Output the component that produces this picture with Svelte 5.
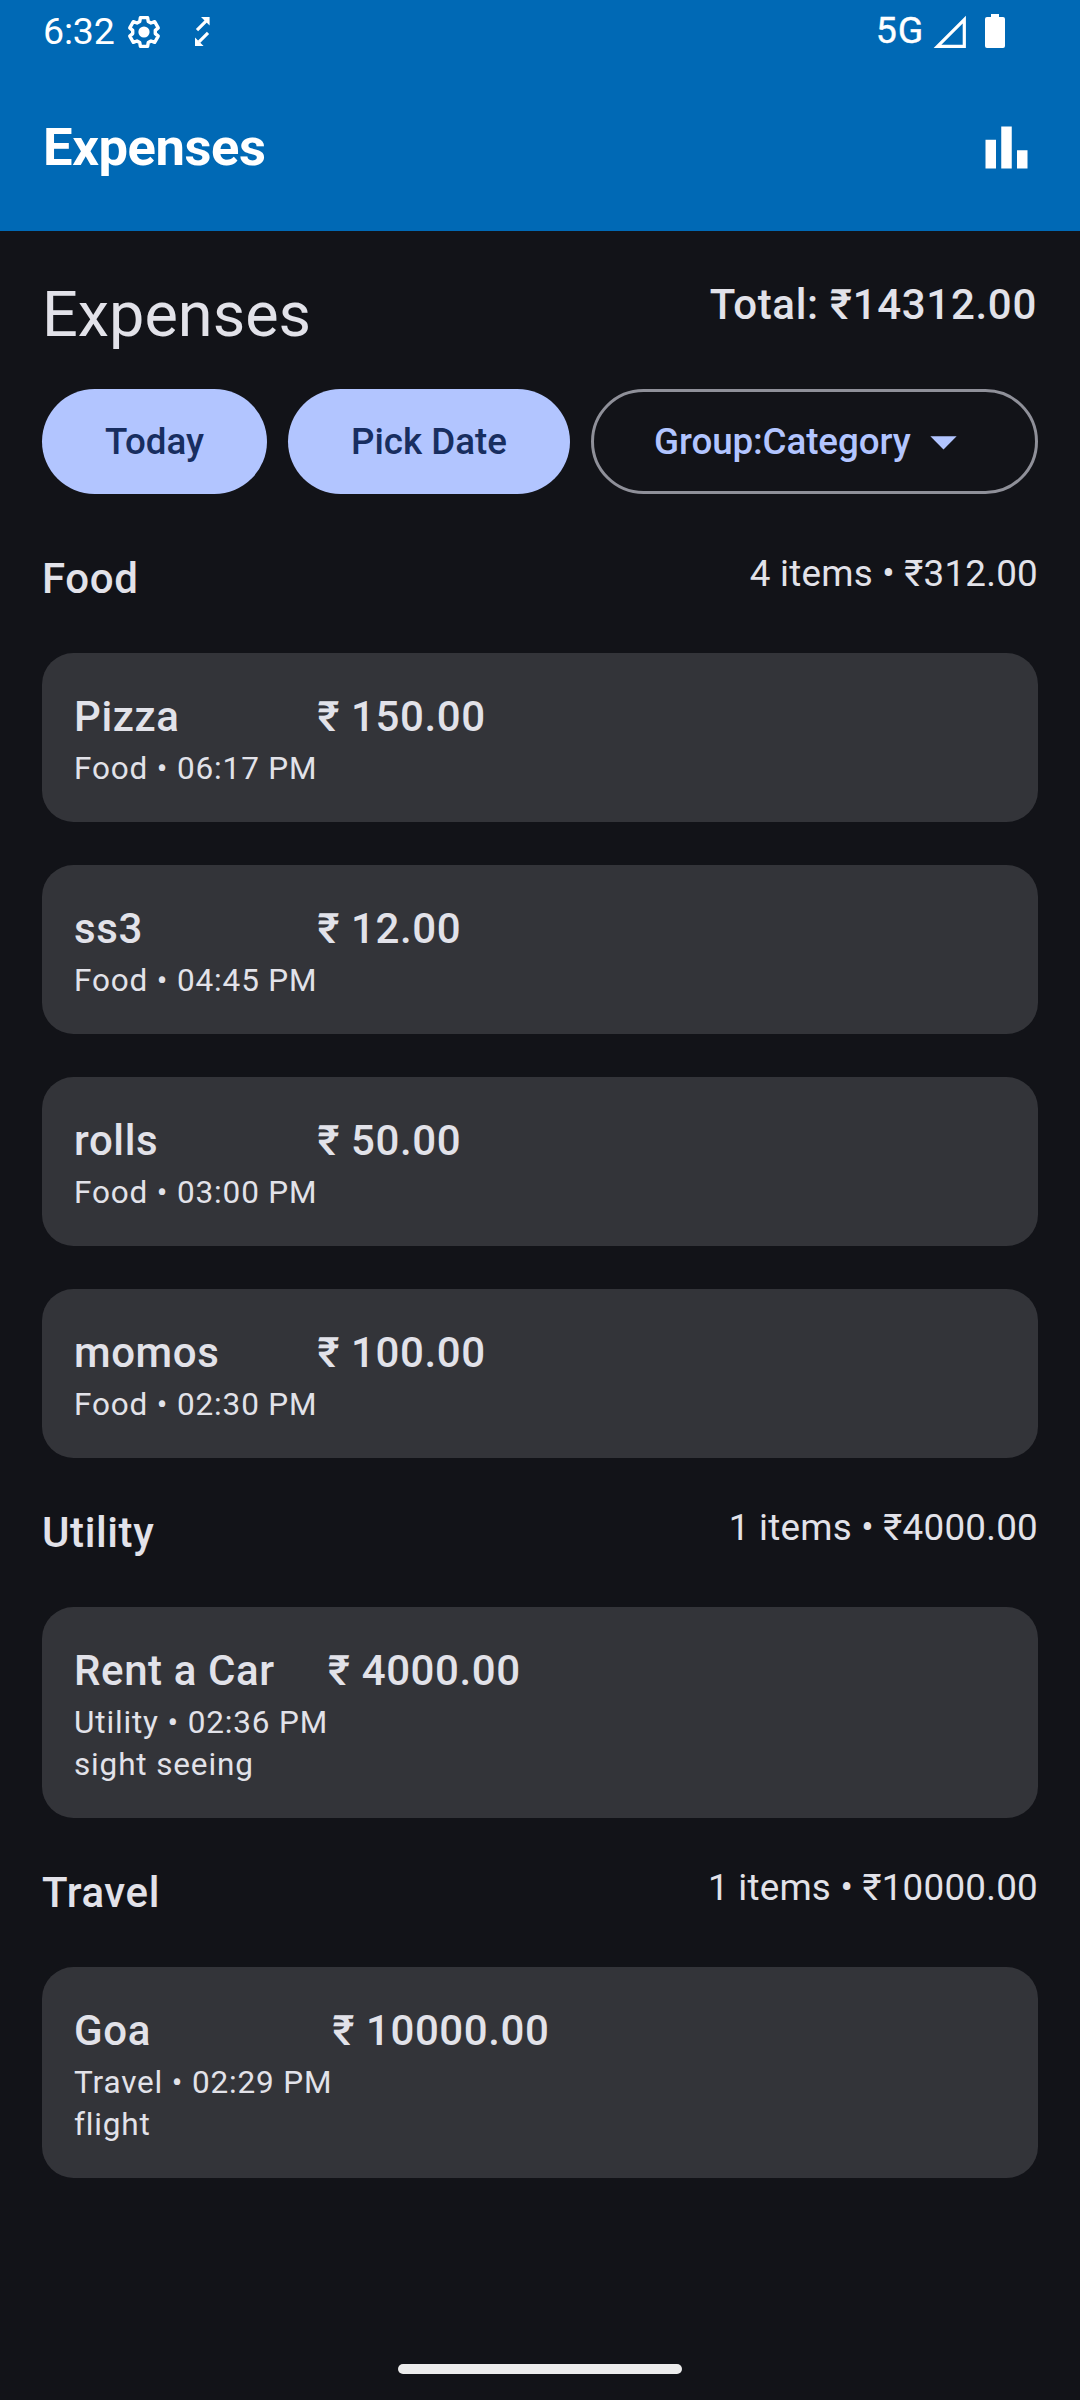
<script>
  const groups = [
    {
      name: 'Food',
      summary: '4 items • ₹312.00',
      items: [
        { title: 'Pizza', meta: 'Food • 06:17 PM', amount: '₹ 150.00' },
        { title: 'ss3', meta: 'Food • 04:45 PM', amount: '₹ 12.00' },
        { title: 'rolls', meta: 'Food • 03:00 PM', amount: '₹ 50.00' },
        { title: 'momos', meta: 'Food • 02:30 PM', amount: '₹ 100.00' },
      ],
    },
    {
      name: 'Utility',
      summary: '1 items • ₹4000.00',
      items: [
        { title: 'Rent a Car', meta: 'Utility • 02:36 PM', amount: '₹ 4000.00', note: 'sight seeing' },
      ],
    },
    {
      name: 'Travel',
      summary: '1 items • ₹10000.00',
      items: [
        { title: 'Goa', meta: 'Travel • 02:29 PM', amount: '₹ 10000.00', note: 'flight' },
      ],
    },
  ];

  // Six-toothed gear outline centred on 0,0; each tooth is [angle offset, radius] pairs.
  const tooth = [[-22, 11.4], [-14, 14.8], [14, 14.8], [22, 11.4]];
  const gear = [0, 60, 120, 180, 240, 300]
    .flatMap((base) =>
      tooth.map(([offset, radius]) => {
        const a = ((base + offset) * Math.PI) / 180;
        return `${(radius * Math.sin(a)).toFixed(2)},${(-radius * Math.cos(a)).toFixed(2)}`;
      })
    )
    .join(' ');
</script>

<div class="screen">
  <header>
    <div class="status">
      <div class="status-left">
        <span class="clock">6:32</span>
        <svg class="gear" viewBox="-17 -17 34 34">
          <polygon points={gear} fill="none" stroke="#fff" stroke-width="3.4" stroke-linejoin="round" />
          <circle r="5.6" fill="#fff" />
        </svg>
        <svg class="arrows" viewBox="0 0 15 29">
          <path d="M6 0h8.600v8.600zM0 20.400L8.600 29H0z" fill="#fff" />
          <path d="M2 13.200L11 4.200M13 15.800L4 24.800" fill="none" stroke="#fff" stroke-width="3.100" />
        </svg>
      </div>
      <div class="status-right">
        <span class="network">5G</span>
        <svg class="signal" viewBox="0 0 33 33">
          <path d="M4.500 31.300H31.300V4.500z" fill="none" stroke="#fff" stroke-width="3.200" />
        </svg>
        <svg class="battery" viewBox="0 0 20 34">
          <path d="M6 0h8v3h4a2 2 0 0 1 2 2v27a2 2 0 0 1-2 2H2a2 2 0 0 1-2-2V5a2 2 0 0 1 2-2h4z" fill="#fff" />
        </svg>
      </div>
    </div>
    <div class="appbar">
      <span class="title">Expenses</span>
      <svg class="chart" viewBox="0 0 24 24">
        <path d="M4 9h4v11H4zM16 13h4v7h-4zM10 4h4v16h-4z" fill="#fff" />
      </svg>
    </div>
  </header>

  <main>
    <div class="heading">
      <h1>Expenses</h1>
      <span class="total">Total: ₹14312.00</span>
    </div>
    <div class="filters">
      <button class="filled">Today</button>
      <button class="filled">Pick Date</button>
      <button class="outlined">
        <span>Group:Category</span>
        <svg viewBox="0 0 24 24"><path d="M7 10l5 5 5-5z" fill="currentColor" /></svg>
      </button>
    </div>

    <div class="list">
      {#each groups as group}
        <div class="group-head">
          <h2>{group.name}</h2>
          <span>{group.summary}</span>
        </div>
        {#each group.items as item}
          <div class="card">
            <div class="info">
              <div class="name">{item.title}</div>
              <div class="meta">{item.meta}</div>
              {#if item.note}<div class="meta">{item.note}</div>{/if}
            </div>
            <div class="name">{item.amount}</div>
          </div>
        {/each}
      {/each}
    </div>
  </main>

  <div class="nav"><div class="handle"></div></div>
</div>

<style>
  :global(body) {
    margin: 0;
    background: #121318;
  }
  .screen {
    width: 1080px;
    height: 2400px;
    display: flex;
    flex-direction: column;
    overflow: hidden;
    background: #121318;
    color: #e2e2e9;
    font-family: Roboto, 'Noto Sans', sans-serif;
  }
  svg {
    display: block;
    flex: none;
  }
  header {
    background: #0069b5;
    color: #fff;
    height: 231px;
    flex: none;
  }
  .status {
    height: 63px;
    display: flex;
    justify-content: space-between;
    align-items: flex-start;
    padding: 0 75px 0 43px;
  }
  .status-left,
  .status-right {
    display: flex;
    align-items: center;
    height: 63px;
  }
  .status-right {
    height: 62px;
  }
  .clock,
  .network {
    font-size: 37.500px;
    line-height: 60px;
    padding-bottom: 2px;
  }
  .clock {
    width: 72px;
    letter-spacing: -0.200px;
  }
  .network {
    letter-spacing: 0.800px;
    -webkit-text-stroke: 0.400px #fff;
  }
  .gear {
    width: 34px;
    height: 34px;
    margin-left: 12px;
  }
  .arrows {
    width: 15px;
    height: 29px;
    margin-left: 34px;
  }
  .signal {
    width: 33px;
    height: 33px;
    margin-left: 9px;
  }
  .battery {
    width: 20px;
    height: 34px;
    margin-left: 19px;
  }
  .appbar {
    height: 168px;
    display: flex;
    align-items: center;
    justify-content: space-between;
    padding: 0 42px 0 43px;
  }
  .title {
    font-size: 52.500px;
    font-weight: 700;
    letter-spacing: -0.400px;
  }
  .chart {
    width: 63px;
    height: 63px;
  }
  main {
    padding: 42px 42px 0;
    flex: 1;
  }
  .heading,
  .group-head {
    display: flex;
    justify-content: space-between;
    align-items: flex-start;
  }
  h1 {
    margin: 0;
    font-size: 63px;
    line-height: 84px;
    font-weight: 400;
  }
  .total,
  h2,
  .name {
    margin: 0;
    font-size: 42px;
    line-height: 63px;
    font-weight: 500;
    letter-spacing: 0.600px;
    white-space: nowrap;
  }
  .total {
    letter-spacing: 0.700px;
    padding-right: 1px;
  }
  .filters {
    display: flex;
    gap: 21px;
    margin-top: 32px;
  }
  button {
    height: 105px;
    box-sizing: border-box;
    border: 0;
    border-radius: 53px;
    padding: 0 63px;
    display: flex;
    align-items: center;
    font: 500 36.750px/52px Roboto, 'Noto Sans', sans-serif;
    white-space: nowrap;
  }
  .filled {
    background: #b2c5ff;
    color: #182e60;
    letter-spacing: 0;
  }
  .outlined {
    flex: 1;
    background: none;
    border: 3px solid #8f9099;
    padding: 0 60px;
    color: #b2c5ff;
    letter-spacing: -0.100px;
    justify-content: space-between;
  }
  .outlined svg {
    width: 63px;
    height: 63px;
  }
  .list {
    display: flex;
    flex-direction: column;
    gap: 43px;
    margin-top: 53px;
  }
  .group-head {
    height: 63px;
  }
  .group-head span {
    font-size: 36.750px;
    line-height: 53px;
    letter-spacing: 0.250px;
  }
  .card {
    display: flex;
    align-items: flex-start;
    padding: 32px;
    border-radius: 31.500px;
    background: #333439;
  }
  .meta {
    font-size: 31.500px;
    line-height: 42px;
    letter-spacing: 0.850px;
    white-space: nowrap;
  }
  .nav {
    height: 63px;
    flex: none;
    display: flex;
    align-items: center;
    justify-content: center;
  }
  .handle {
    width: 284px;
    height: 10px;
    border-radius: 5px;
    background: #ececec;
  }
</style>
